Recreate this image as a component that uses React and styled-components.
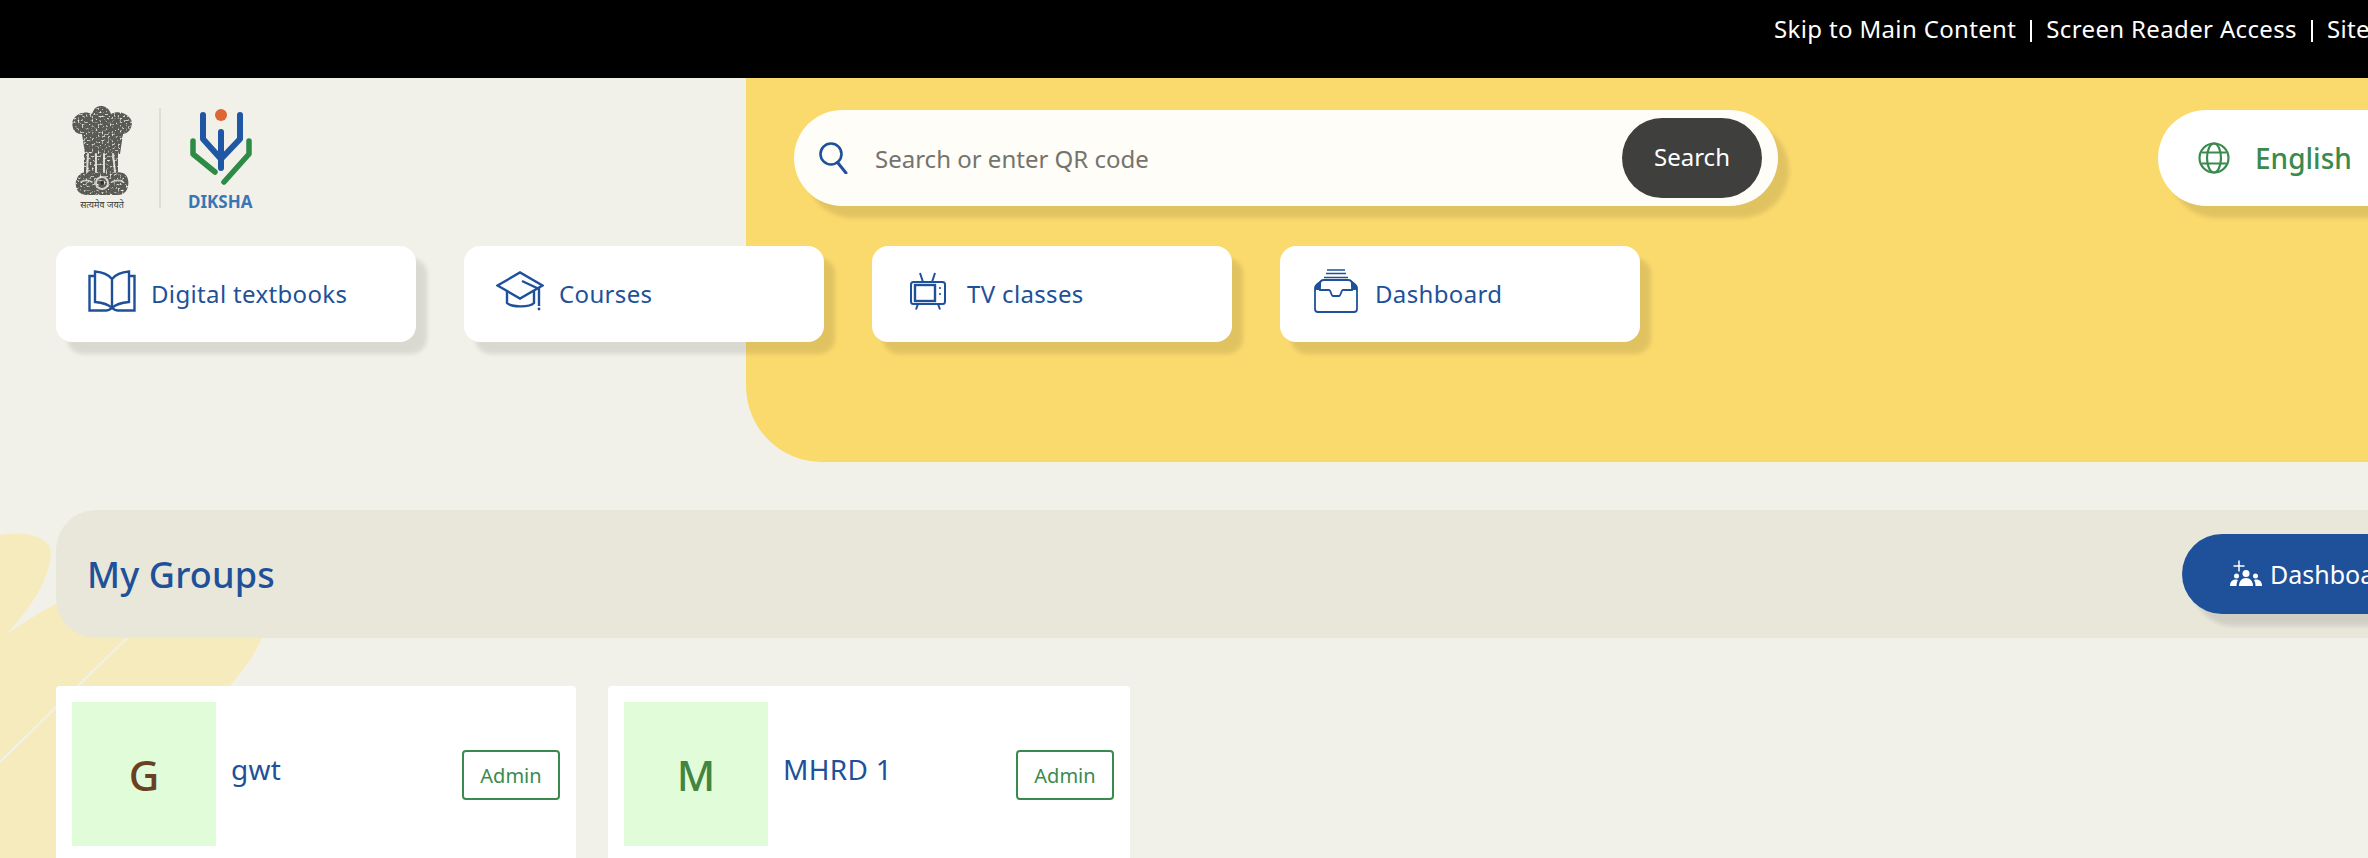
import { Fragment } from "react";
import styled, { createGlobalStyle } from "styled-components";

const BLUE = "#1e5199";
const GREEN = "#3a8a4e";
const FONT = `"Noto Sans", "Open Sans", sans-serif`;

const GlobalStyle = createGlobalStyle`
    html, body {
        margin: 0;
        height: 100%;
        overflow: hidden;
        background: #f2f1e9;
    }
    * {
        box-sizing: border-box;
    }
`;

function BookIcon() {
    return (
        <Glyph viewBox="0 0 48 42" width="48" height="42" fill="none" stroke={BLUE} strokeWidth="2.4">
            <path d="M24 9C20 4 13 2 7 1.5V32c6 .5 13 2 17 6 4-4 11-5.500 17-6V1.500C35 2 28 4 24 9zM24 9v29" />
            <path d="M7 6H1.500v34.500h17c2 0 3.500-1 5.500-2.500 2 1.500 3.500 2.500 5.500 2.500h17V6H41" />
        </Glyph>
    );
}

function CapIcon() {
    return (
        <Glyph viewBox="0 0 48 40" width="48" height="40" fill="none" stroke={BLUE} strokeWidth="2.4">
            <path d="M1.500 14.500L24 1.500l22.500 13L24 27.500z" />
            <path d="M11 20v12c4 4 22 5 27 0V20" />
            <path d="M26 10l17 8v17" />
            <circle cx="43" cy="38" r="1.400" fill={BLUE} stroke="none" />
        </Glyph>
    );
}

function TvIcon() {
    return (
        <Glyph viewBox="0 0 48 38" width="48" height="38" fill="none" stroke={BLUE} strokeWidth="2">
            <rect x="7" y="10" width="34" height="22" rx="2.500" />
            <rect x="11" y="13" width="20" height="16" strokeWidth="2.400" />
            <path d="M19 10l-3-9M28 10l3-9M14 32l-2 5.500M34 32l2 5.500" />
            <path d="M36 15v2M36 21v2" strokeWidth="1.600" />
        </Glyph>
    );
}

function TrayIcon() {
    return (
        <Glyph viewBox="0 0 48 44" width="48" height="44" fill="none" stroke={BLUE} strokeWidth="1.800">
            <path d="M15 1h18M14 4.500h20M12 8.500h24" strokeWidth="1.600" />
            <path d="M8 18v-3c0-2 1-4 4-4h24c3 0 4 2 4 4v3" />
            <path d="M3 19c0-2 1-3.500 5-6v8h9c2 0 2 6 4 6h6c2 0 2-6 4-6h9v-8c4 2.500 5 4 5 6v21c0 2-1 3-3 3H6c-2 0-3-1-3-3z" />
            <path d="M3 19c0-2 1-3.500 5-6v8H3zM45 19c0-2-1-3.500-5-6v8h5z" fill={BLUE} stroke="none" />
        </Glyph>
    );
}

function SearchIcon() {
    return (
        <Glyph viewBox="0 0 32 32" width="32" height="32" fill="none" stroke={BLUE} strokeWidth="2.600" strokeLinecap="round">
            <circle cx="13" cy="12" r="10.500" />
            <path d="M20 21l8 10" strokeWidth="3" />
        </Glyph>
    );
}

function GlobeIcon() {
    return (
        <Glyph viewBox="0 0 32 32" width="32" height="32" fill="none" stroke={GREEN} strokeWidth="2.200">
            <circle cx="16" cy="16" r="14.500" />
            <ellipse cx="16" cy="16" rx="7" ry="14.500" />
            <path d="M3.500 10.500h25M3.500 21.500h25" />
        </Glyph>
    );
}

function PeopleIcon() {
    return (
        <Glyph viewBox="0 0 32 28" width="32" height="28" fill="#ffffff">
            <path d="M3.500 6h11M9 .5v11" stroke="#ffffff" strokeWidth="1.500" fill="none" />
            <circle cx="16" cy="13.500" r="3.500" />
            <circle cx="6.500" cy="16" r="2.500" />
            <circle cx="25.500" cy="16" r="2.500" />
            <path d="M9 26c0-5 3-8 7-8s7 3 7 8z" />
            <path d="M0 26c0-4 2-6.500 6-6.500 1 0 1.500.2 2 .5-1 1.500-1.500 3.500-1.500 6zM32 26c0-4-2-6.500-6-6.500-1 0-1.500.2-2 .5 1 1.500 1.500 3.500 1.500 6z" />
        </Glyph>
    );
}

function Emblem() {
    return (
        <svg viewBox="0 0 60 90" width="60" height="90">
            <defs>
                <filter id="engrave" x="0" y="0" width="100%" height="100%">
                    <feTurbulence type="fractalNoise" baseFrequency="0.5" numOctaves="2" seed="4" result="noise" />
                    <feColorMatrix
                        in="noise"
                        type="matrix"
                        values="0 0 0 0 0.1  0 0 0 0 0.1  0 0 0 0 0.09  4 0 0 0 -0.9"
                        result="grain"
                    />
                    <feComposite in="grain" in2="SourceGraphic" operator="in" />
                    <feGaussianBlur stdDeviation="0.3" />
                </filter>
            </defs>
            <g filter="url(#engrave)">
                <path d="M20 8c2-6 5-8 9-8s8 2 10 8c6-3 14-2 19 4 3 4 2 9-1 13-2 2-4 3-6 3l-3 20H13l-3-20c-4 0-8-2-9-6-2-6 0-11 6-14 4-2 9-2 13 0z" fill="#000" />
                <path d="M12 48h34v19H12z" fill="#000" />
                <path d="M8 68c3-2 8-2 12-2h20c5 0 10 0 13 2 3 3 4 8 3 12-1 6-5 9-10 9H15c-6 0-10-3-11-9-1-4 1-9 4-12z" fill="#000" />
            </g>
            <g fill="none" strokeLinecap="round">
                <path d="M16 48l-1 18M24 48v18M32 48v18M41 48l2 18" stroke="#f2f1e9" strokeWidth="2" opacity="0.85" />
                <circle cx="30" cy="77" r="6" stroke="#f2f1e9" strokeWidth="2" opacity="0.8" />
                <circle cx="30" cy="77" r="1.800" fill="#2a2a28" />
                <path d="M9 76c3-2 7-2 11 0M40 76c4-2 8-2 11 0" stroke="#f2f1e9" strokeWidth="1.600" opacity="0.75" />
            </g>
        </svg>
    );
}

function DikshaMark() {
    return (
        <svg viewBox="0 0 63 78" width="63" height="78">
            <g fill="none" strokeLinecap="round" strokeLinejoin="round">
                <circle cx="32" cy="7" r="6" fill="#dd6635" />
                <path d="M14 7v24l18 20M51 7v24L32 51M32 24v36" stroke="#1f57a4" strokeWidth="6" />
                <path d="M4 33v13l22 18M60 33v13L35 74" stroke="#2e8b46" strokeWidth="5.500" />
            </g>
        </svg>
    );
}

function Leaf() {
    return (
        <LeafArt viewBox="0 0 300 338" width="300" height="338">
            <path d="M0 15C20 11 50 14 51 33 50 60 28 92 5 115L0 118z" fill="#f5ebbd" />
            <path d="M5 115C25 102 40 92 57 83L120 60 262 118C255 135 243 150 230 166L200 338H0V118z" fill="#f5ebbd" />
            <path d="M0 242L127 118" stroke="#f2f1e9" strokeWidth="2" fill="none" />
        </LeafArt>
    );
}

const links = ["Skip to Main Content", "Screen Reader Access", "Site"];
const navItems = [
    { label: "Digital textbooks", icon: <BookIcon /> },
    { label: "Courses", icon: <CapIcon /> },
    { label: "TV classes", icon: <TvIcon /> },
    { label: "Dashboard", icon: <TrayIcon /> },
];
const groups = [
    { name: "gwt", letter: "G", color: "#6b3f22" },
    { name: "MHRD 1", letter: "M", color: "#43853f" },
];

export default function App() {
    return (
        <Page>
            <GlobalStyle />
            <TopBar>
                {links.map((link, i) => (
                    <Fragment key={link}>
                        {i > 0 && <TopSeparator />}
                        <TopLink>{link}</TopLink>
                    </Fragment>
                ))}
            </TopBar>
            <Hero>
                <HeroPanel />
                <HeaderRow>
                    <Logos>
                        <EmblemBlock>
                            <Emblem />
                            <Motto>सत्यमेव जयते</Motto>
                        </EmblemBlock>
                        <LogoDivider />
                        <Diksha>
                            <DikshaMark />
                            <DikshaName>DIKSHA</DikshaName>
                        </Diksha>
                    </Logos>
                    <SearchBox>
                        <SearchIcon />
                        <SearchText>Search or enter QR code</SearchText>
                        <SearchButton>Search</SearchButton>
                    </SearchBox>
                    <Language>
                        <GlobeIcon />
                        <span>English</span>
                    </Language>
                </HeaderRow>
                <Nav>
                    {navItems.map((item) => (
                        <NavCard key={item.label}>
                            <NavIcon>{item.icon}</NavIcon>
                            {item.label}
                        </NavCard>
                    ))}
                </Nav>
            </Hero>
            <Content>
                <Leaf />
                <SectionBar>
                    <SectionTitle>My Groups</SectionTitle>
                    <DashboardButton>
                        <PeopleIcon />
                        Dashboard
                    </DashboardButton>
                </SectionBar>
                <Cards>
                    {groups.map((group) => (
                        <GroupCard key={group.name}>
                            <Thumb $color={group.color}>{group.letter}</Thumb>
                            <GroupName>{group.name}</GroupName>
                            <Badge>Admin</Badge>
                        </GroupCard>
                    ))}
                </Cards>
            </Content>
        </Page>
    );
}

const Page = styled.div`
    width: 2520px;
    height: 858px;
    overflow: hidden;
    background: #f2f1e9;
    font-family: ${FONT};
`;

const TopBar = styled.div`
    height: 78px;
    background: #000000;
    display: flex;
    align-items: flex-start;
    padding: 11px 0 0 1774px;
`;

const TopLink = styled.a`
    color: #ffffff;
    font-size: 24px;
    line-height: 36px;
    letter-spacing: 0.35px;
`;

const TopSeparator = styled.span`
    width: 2px;
    height: 22px;
    margin: 9px 14px 0 14px;
    background: #ffffff;
`;

const Hero = styled.header`
    position: relative;
    height: 384px;
    padding: 28px 0 0 56px;
`;

const HeroPanel = styled.div`
    position: absolute;
    top: 0;
    bottom: 0;
    left: 746px;
    right: 0;
    background: #fad96d;
    border-bottom-left-radius: 76px;
`;

const HeaderRow = styled.div`
    position: relative;
    display: flex;
    align-items: flex-start;
    height: 112px;
`;

const Logos = styled.div`
    width: 738px;
    padding-left: 16px;
    display: flex;
    align-items: flex-start;
`;

const EmblemBlock = styled.div`
    width: 60px;
    display: flex;
    flex-direction: column;
    align-items: center;
`;

const Motto = styled.div`
    margin-top: 3px;
    font-size: 9px;
    line-height: 11px;
    white-space: nowrap;
    color: #3a3a38;
`;

const LogoDivider = styled.div`
    width: 2px;
    height: 100px;
    margin: 2px 27px 0 27px;
    background: #dfded6;
`;

const Diksha = styled.div`
    display: flex;
    flex-direction: column;
    align-items: center;
    margin-top: 2px;
`;

const DikshaName = styled.div`
    font-size: 17px;
    line-height: 20px;
    font-weight: 700;
    color: #3a76b4;
    margin-top: 6px;
`;

const SearchBox = styled.div`
    width: 984px;
    height: 96px;
    margin-top: 4px;
    padding: 0 16px 0 24px;
    border-radius: 48px;
    background: #fffdf7;
    box-shadow: 11px 12px 4px rgba(0, 0, 0, 0.1);
    display: flex;
    align-items: center;
`;

const Glyph = styled.svg`
    display: block;
    flex-shrink: 0;
`;

const SearchText = styled.span`
    flex: 1;
    margin-left: 25px;
    font-size: 24px;
    color: #74736d;
`;

const SearchButton = styled.button`
    width: 140px;
    height: 80px;
    padding: 0 0 4px;
    border: none;
    border-radius: 40px;
    background: #3f3f3d;
    color: #ffffff;
    font-family: ${FONT};
    font-size: 24px;
`;

const Language = styled.div`
    width: 362px;
    height: 96px;
    margin: 4px 0 0 380px;
    padding-left: 40px;
    border-radius: 48px;
    background: #ffffff;
    box-shadow: 11px 12px 4px rgba(0, 0, 0, 0.1);
    display: flex;
    align-items: center;
    gap: 25px;
    color: ${GREEN};
    font-size: 28px;
    font-weight: 500;
`;

const Nav = styled.nav`
    position: relative;
    display: flex;
    gap: 48px;
    margin-top: 28px;
`;

const NavCard = styled.a`
    width: 360px;
    height: 96px;
    padding: 0 0 2px 32px;
    border-radius: 16px;
    background: #ffffff;
    box-shadow: 11px 12px 4px rgba(0, 0, 0, 0.1);
    display: flex;
    align-items: center;
    gap: 15px;
    color: ${BLUE};
    font-size: 24px;
    letter-spacing: 0.35px;
`;

const NavIcon = styled.span`
    width: 48px;
    display: flex;
    justify-content: center;
    margin-top: -4px;
`;

const Content = styled.main`
    position: relative;
    padding: 48px 0 0 56px;
`;

const LeafArt = styled.svg`
    position: absolute;
    left: 0;
    top: 58px;
`;

const SectionBar = styled.div`
    position: relative;
    height: 128px;
    padding: 0 0 0 31px;
    border-radius: 40px 0 0 40px;
    background: #e9e7da;
    display: flex;
    align-items: center;
    justify-content: space-between;
`;

const SectionTitle = styled.h2`
    margin: 0;
    color: ${BLUE};
    font-size: 36px;
    font-weight: 500;
    letter-spacing: 0.15px;
`;

const DashboardButton = styled.button`
    width: 338px;
    height: 80px;
    padding-left: 48px;
    border: none;
    border-radius: 40px;
    background: ${BLUE};
    box-shadow: 11px 12px 4px rgba(0, 0, 0, 0.1);
    display: flex;
    align-items: center;
    gap: 8px;
    color: #ffffff;
    font-family: ${FONT};
    font-size: 25px;
`;

const Cards = styled.div`
    position: relative;
    display: flex;
    gap: 32px;
    margin-top: 48px;
`;

const GroupCard = styled.article`
    width: 520px;
    height: 200px;
    padding: 16px;
    border-radius: 4px;
    background: #ffffff;
    display: flex;
    align-items: flex-start;

    & + & {
        width: 522px;
    }
`;

const Thumb = styled.div`
    width: 144px;
    height: 144px;
    background: #e1fcd9;
    display: flex;
    align-items: center;
    justify-content: center;
    color: ${(props) => props.$color};
    font-size: 42px;
    font-weight: 500;
`;

const GroupName = styled.div`
    flex: 1;
    margin: 48px 0 0 15px;
    color: ${BLUE};
    font-size: 28px;
    line-height: 38px;
    letter-spacing: 0.3px;
`;

const Badge = styled.div`
    width: 98px;
    height: 50px;
    margin-top: 48px;
    border: 2px solid ${GREEN};
    border-radius: 4px;
    display: flex;
    align-items: center;
    justify-content: center;
    color: ${GREEN};
    font-size: 20px;
`;
